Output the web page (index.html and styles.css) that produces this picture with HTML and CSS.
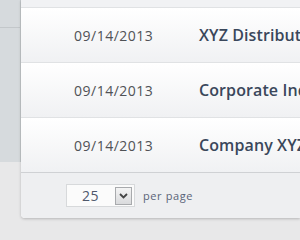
FILE: index.html
```html
<!DOCTYPE html>
<html lang="en">
<head>
    <meta charset="UTF-8">
    <title>Orders</title>
    <link rel="stylesheet" href="styles.css">
</head>
<body>
    <div class="page">
        <div class="sidebar">
            <div class="side-item"></div>
        </div>
        <div class="card">
            <div class="row row-top"></div>
            <div class="row">
                <span class="date">09/14/2013</span>
                <span class="company">XYZ Distribution</span>
            </div>
            <div class="row">
                <span class="date">09/14/2013</span>
                <span class="company">Corporate Industries</span>
            </div>
            <div class="row">
                <span class="date">09/14/2013</span>
                <span class="company">Company XYZ</span>
            </div>
            <div class="footer">
                <div class="select">
                    <span class="select-value">25</span>
                    <span class="select-btn">
                        <svg width="9" height="6" viewBox="0 0 9 6"><path d="M1 1 L4.5 4.5 L8 1" fill="none" stroke="#444" stroke-width="1.8"/></svg>
                    </span>
                </div>
                <span class="per-page">per page</span>
            </div>
        </div>
    </div>
</body>
</html>
```

FILE: styles.css
```css
*{
    margin: 0;
    padding: 0;
    box-sizing: border-box;
}
body{
    width: 300px;
    height: 240px;
    overflow: hidden;
    background-color: #e8e8e9;
    font-family: 'Open Sans', sans-serif;
}
.page{
    display: flex;
    align-items: flex-start;
}
.sidebar{
    width: 21px;
    height: 162px;
    flex-shrink: 0;
    background-color: #d6dadd;
    border-right: 1px solid #c4c8cb;
}
.side-item{
    height: 28px;
    border-bottom: 1px solid #c3c7ca;
}
.card{
    flex: 1;
    background-color: #fff;
    border-radius: 0 0 0 4px;
    box-shadow: 0 1px 3px rgba(0, 0, 0, 0.22);
    overflow: hidden;
}
.row{
    height: 55px;
    display: flex;
    align-items: center;
    border-bottom: 1px solid #e0e2e4;
    background-image: linear-gradient(#ffffff, #f0f1f3);
}
.row-top{
    height: 8px;
    background-image: none;
    background-color: #f1f2f4;
}
.date{
    width: 178px;
    padding-left: 53px;
    flex-shrink: 0;
    font-size: 14px;
    letter-spacing: 0.5px;
    color: #505256;
}
.company{
    white-space: nowrap;
    font-size: 16px;
    font-weight: 600;
    letter-spacing: 0.1px;
    color: #3a475b;
}
.footer{
    height: 46px;
    display: flex;
    align-items: center;
    padding-left: 45px;
    border-top: 1px solid #cfd1d4;
    margin-top: -1px;
    background-color: #eeeff1;
}
.select{
    width: 69px;
    height: 23px;
    display: flex;
    align-items: center;
    justify-content: space-between;
    padding: 0 2px 0 15px;
    border: 1px solid #d7d9db;
    background-color: #fbfbfb;
}
.select-value{
    font-size: 14px;
    letter-spacing: 0.5px;
    color: #4f586b;
}
.select-btn{
    width: 17px;
    height: 18px;
    display: flex;
    align-items: center;
    justify-content: center;
    border: 1px solid #a8aaad;
    background-image: linear-gradient(#f4f4f4, #d9dadc);
}
.per-page{
    margin-left: 8px;
    font-size: 11px;
    letter-spacing: 0.6px;
    color: #5a6478;
}
```
